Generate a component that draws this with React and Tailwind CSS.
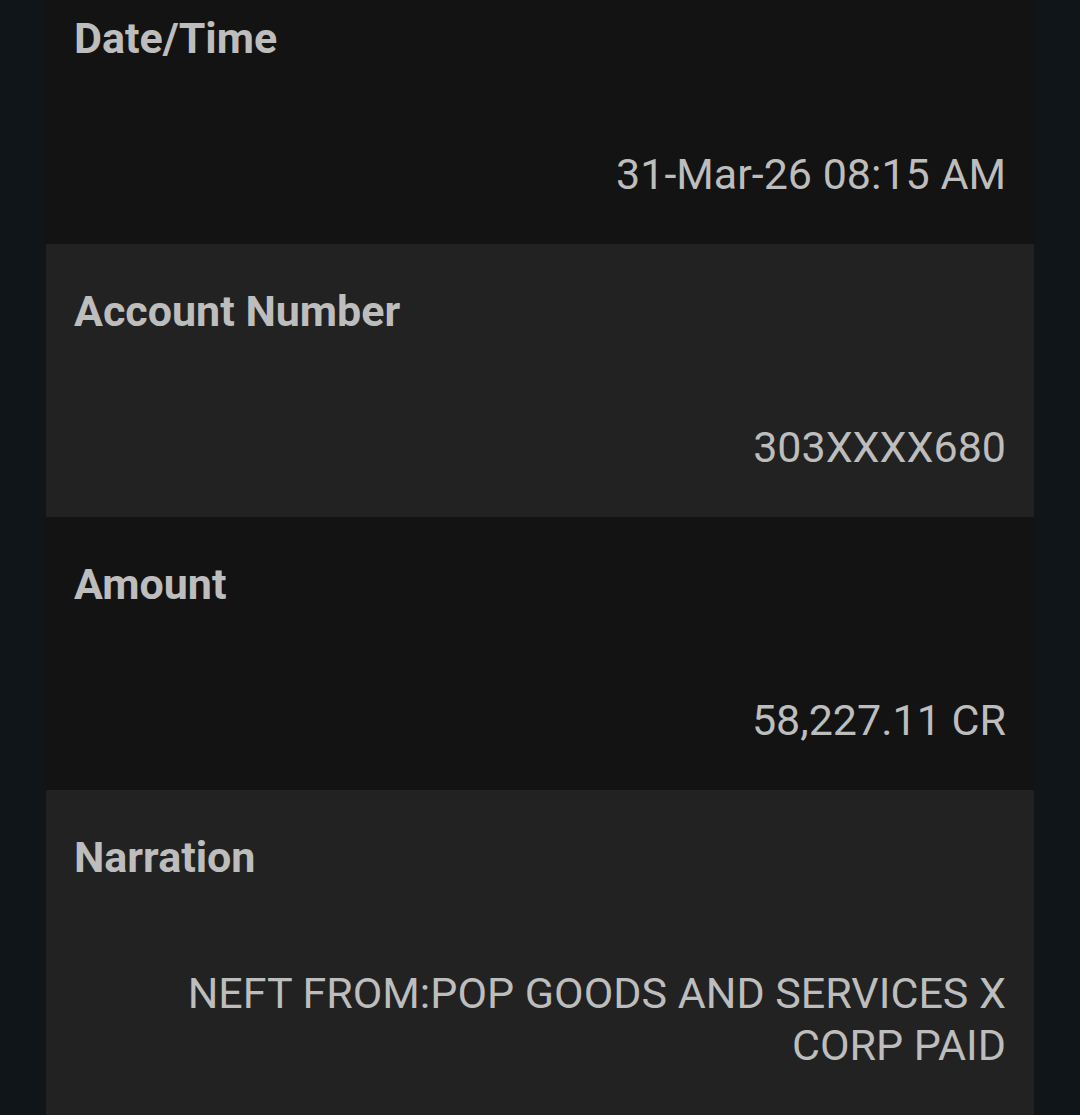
const rows = [
  { label: "Date/Time", value: "31-Mar-26 08:15 AM", dark: true },
  { label: "Account Number", value: "303XXXX680", dark: false },
  { label: "Amount", value: "58,227.11 CR", dark: true },
  { label: "Narration", value: "NEFT FROM:POP GOODS AND SERVICES X CORP PAID", dark: false },
];

function DetailRow({ label, value, dark }) {
  return (
    <div className={`${dark ? "bg-[#131313]" : "bg-[#222222]"} px-[28px] pt-[41px] pb-[44px]`}>
      <div className="text-[43px] leading-[52px] font-bold text-[#bdbdbd]">{label}</div>
      <div className="mt-[84px] ml-auto text-right text-[43px] leading-[52px] text-[#bdbdbd] max-w-[840px]">
        {value}
      </div>
    </div>
  );
}

export default function App() {
  return (
    <div className="h-[1115px] overflow-hidden bg-[#0f1518] px-[46px]" style={{ fontFamily: "Roboto, 'Noto Sans', sans-serif" }}>
      <div className="-mt-[29px] flex flex-col">
        {rows.map((r) => (
          <DetailRow key={r.label} {...r} />
        ))}
      </div>
    </div>
  );
}
